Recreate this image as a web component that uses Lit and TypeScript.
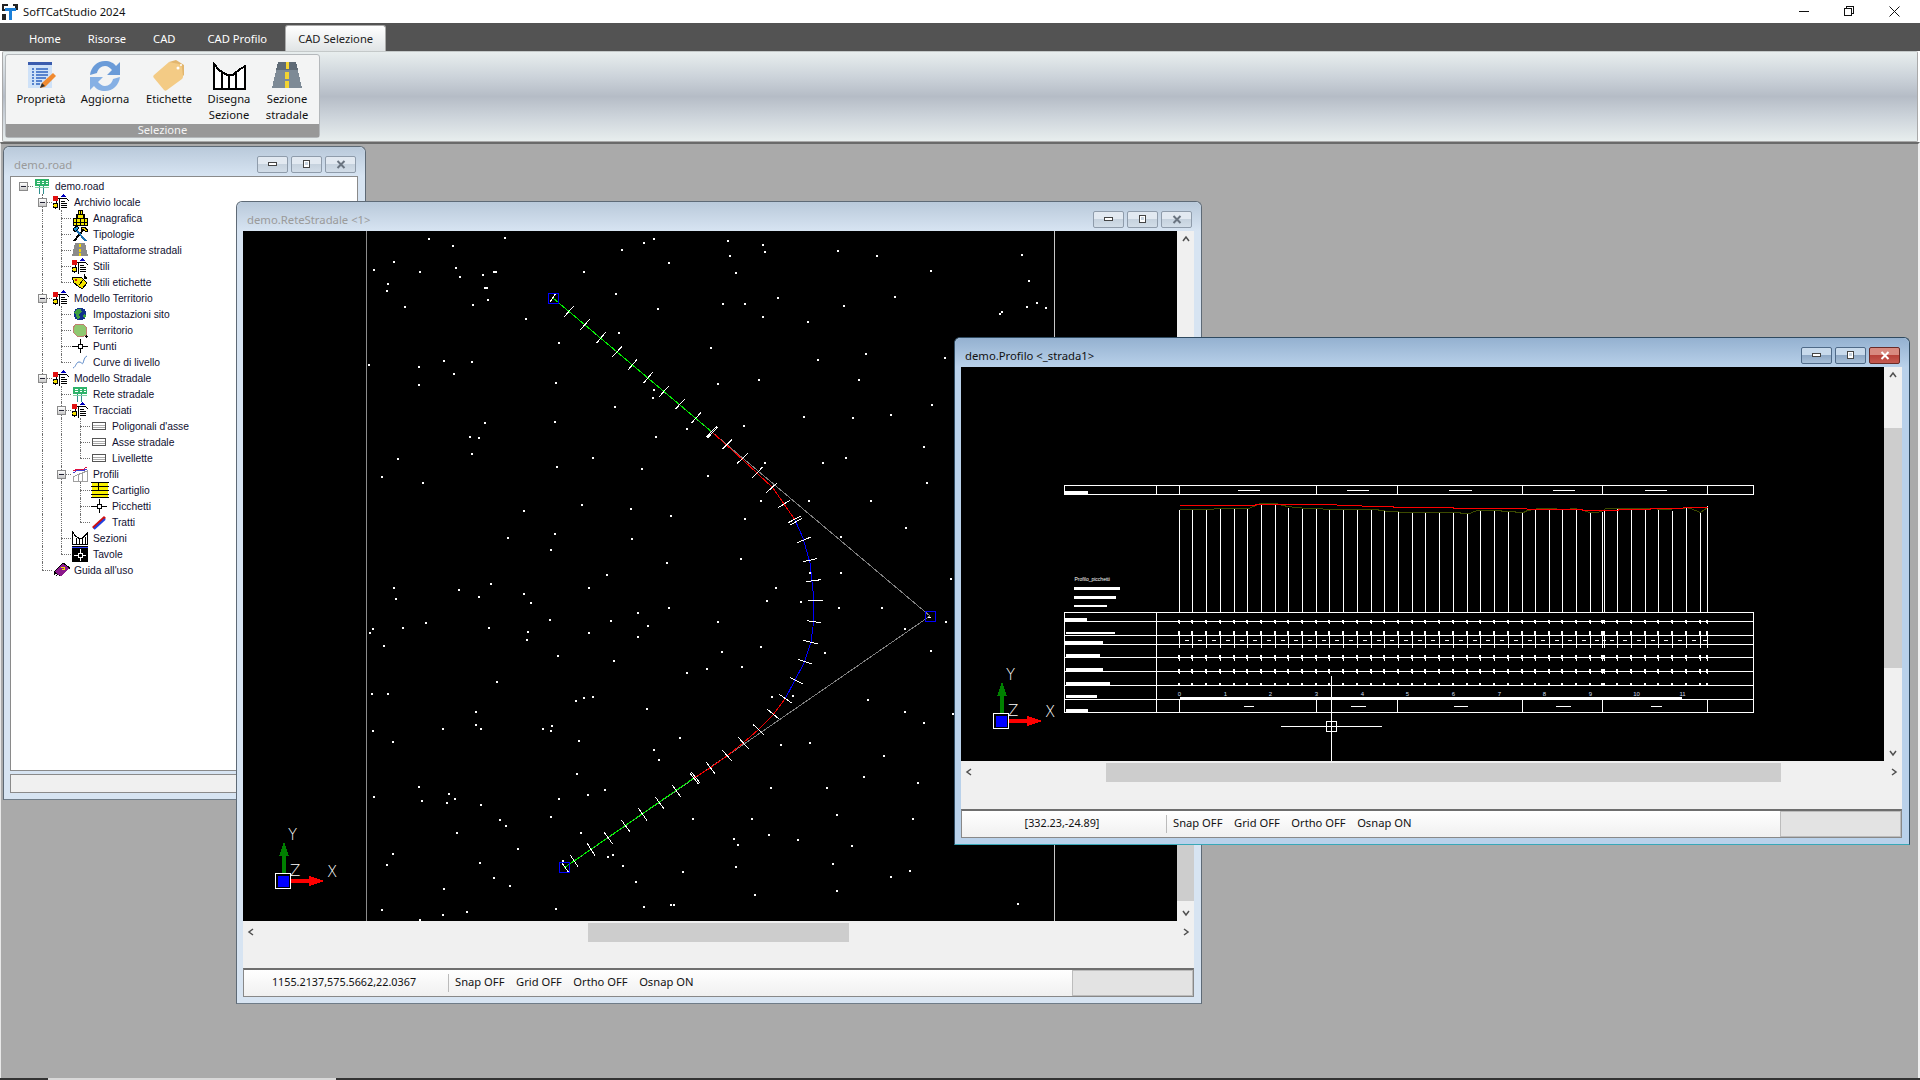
import { LitElement, css, html, svg } from "lit";
import { customElement, property } from "lit/decorators.js";

// helpers for the pixel-ish icons
const ic = (w: number, h: number, body: unknown, crisp = true) => html`<svg
  width=${w}
  height=${h}
  viewBox="0 0 ${w} ${h}"
  shape-rendering=${crisp ? "crispEdges" : "auto"}
>${body}</svg>`;

const structIcon = ic(16, 16, svg`
  <rect x="0" y="2" width="5" height="5" fill="#e01010"/>
  <circle cx="2.5" cy="11.5" r="2.5" fill="#f4e000" stroke="#000"/>
  <path d="M6 4h7l3 3v9H6z" fill="#fff" stroke="#000"/>
  <path d="M8 7h4M8 9h6M8 11h6M8 13h6" stroke="#000"/>
  <path d="M10 0l3 3H7z" fill="#0000c0"/>
  <path d="M5 4h1M3 7v2" stroke="#000"/>`);
const signIcon = ic(16, 16, svg`
  <rect x="1" y="1" width="14" height="7" fill="#2fb36a"/>
  <path d="M3 3h3M3 5h3M8 3h2M8 5h2M12 3h2M12 5h2" stroke="#fff"/>
  <path d="M5 8h1v8H5zM9 8h1v8H9z" fill="#2f8f8f"/>
  <path d="M1 9h14" stroke="#7fd0a0"/>`);
const pileIcon = ic(16, 16, svg`
  <path d="M6 0h4v4h2v4h3v7H1V8h3V4h2z" fill="#f4e800" stroke="#000"/>
  <path d="M6 4h4M4 8h8M8 0v4M5 4v4M11 4v4M8 8v7M4 8v7M12 8v7M1 12h14" stroke="#000"/>`);
const toolsIcon = ic(16, 16, svg`
  <path d="M2 15L12 3" stroke="#000" stroke-width="2"/>
  <path d="M14 15L4 4" stroke="#1a6fb0" stroke-width="2"/>
  <path d="M1 3l4-3 2 2-4 4z" fill="#1a8fd0" stroke="#000"/>
  <path d="M9 1h4l3 4-2 1-3-3H9z" fill="#f0d000" stroke="#000"/>`);
const roadSmall = ic(16, 14, svg`
  <path d="M3 0h10l3 13H0z" fill="#8b8b8b"/>
  <path d="M7 1h2v3H7zM7 6h2v3H7zM7 10h2v3H7z" fill="#f4d800"/>`);
const tagIcon = ic(16, 16, svg`
  <path d="M0 3h9l6 6-5 6-8-6z" fill="#f4e400" stroke="#000"/>
  <circle cx="4" cy="6" r="1.5" fill="#d01010"/>
  <path d="M12 0v4h3M7 11l4-5" stroke="#000"/>`);
const globeIcon = ic(16, 16, svg`
  <circle cx="8" cy="8" r="6.5" fill="#10308c"/>
  <path d="M5 3h4l1 3-3 2 1 4-3 1-1-5-2-1z" fill="#3fa03f"/>
  <path d="M11 9l2-1 1 2-2 3z" fill="#3fa03f"/>`);
const landIcon = ic(16, 16, svg`
  <path d="M1 6l3-4h7l3 3 1 8-3 1H5L1 10z" fill="#8fc870" stroke="#c08070"/>
  <path d="M13 14h3M14 13v3" stroke="#000"/>`);
const crossIcon = ic(16, 16, svg`
  <path d="M0 8h16M8 1v14" stroke="#000"/>
  <rect x="6" y="6" width="4" height="4" fill="#fff" stroke="#000"/>`);
const curveIcon = ic(16, 14, svg`
  <path d="M1 13c3-1 3-6 6-6s3 3 4 1 1-6 4-7" fill="none" stroke="#5a88c8"/>`, false);
const rowsIcon = ic(16, 10, svg`
  <rect x="1.5" y="1.5" width="13" height="7" fill="#fff" stroke="#555"/>
  <path d="M2 4h12M2 6h12" stroke="#aaa"/>`);
const profIcon = ic(16, 16, svg`
  <path d="M1 15V11l4-2 5-2 5-2v10z" fill="#fff" stroke="#a0a0a0"/>
  <path d="M6 9v6M10 7v8" stroke="#a0a0a0"/>
  <path d="M1 5l5-2 4 1 5-3" fill="none" stroke="#e01040"/>
  <path d="M1 7l5-3 4 1 5-2" fill="none" stroke="#4040d0"/>`);
const tableIcon = ic(18, 16, svg`
  <rect x="1" y="0" width="16" height="16" fill="#f8f000"/>
  <path d="M0 .5h18M0 4.5h18M0 8.5h18M0 12.5h18M0 15.5h18" stroke="#000" stroke-width="1.5"/>
  <path d="M7 0v8" stroke="#000"/>`);
const strokeIcon = ic(16, 16, svg`
  <path d="M2 14L14 3" stroke="#d01010" stroke-width="3"/>
  <path d="M3 15L14 5" stroke="#2040e0" stroke-width="2"/>`, false);
const sectIcon = ic(16, 14, svg`
  <path d="M.5 1l3 4 3 2h4l3-3 2-2v11H.5z" fill="#fff" stroke="#000"/>
  <path d="M4 7v6M7 8v5M10 8v5M13 6v7" stroke="#000"/>`);
const sheetIcon = ic(16, 16, svg`
  <rect width="16" height="16" fill="#000"/>
  <path d="M0 1h16" stroke="#3040ff"/>
  <path d="M2 9h12M8 3v12" stroke="#fff"/>
  <rect x="6" y="7" width="4" height="4" fill="#000" stroke="#fff"/>`);
const bookIcon = ic(18, 16, svg`
  <path d="M1 10L10 1l7 5-9 9z" fill="#8c1a8c" stroke="#000"/>
  <path d="M1 10v2l7 3M8 15l9-9" fill="none" stroke="#000"/>
  <path d="M2 12l6 3 8-8" fill="none" stroke="#fff"/>
  <path d="M8 5h3v2H9v1" fill="none" stroke="#f4e000"/>`);

interface TreeRow {
  t: string;
  l: number;
  i: unknown;
  exp?: boolean;
  last?: boolean;
  thru?: number[];
}

const treeRows: TreeRow[] = [
  { t: "demo.road", l: 0, i: signIcon, exp: true },
  { t: "Archivio locale", l: 1, i: structIcon, exp: true },
  { t: "Anagrafica", l: 2, i: pileIcon, thru: [1] },
  { t: "Tipologie", l: 2, i: toolsIcon, thru: [1] },
  { t: "Piattaforme stradali", l: 2, i: roadSmall, thru: [1] },
  { t: "Stili", l: 2, i: structIcon, thru: [1] },
  { t: "Stili etichette", l: 2, i: tagIcon, thru: [1], last: true },
  { t: "Modello Territorio", l: 1, i: structIcon, exp: true },
  { t: "Impostazioni sito", l: 2, i: globeIcon, thru: [1] },
  { t: "Territorio", l: 2, i: landIcon, thru: [1] },
  { t: "Punti", l: 2, i: crossIcon, thru: [1] },
  { t: "Curve di livello", l: 2, i: curveIcon, thru: [1], last: true },
  { t: "Modello Stradale", l: 1, i: structIcon, exp: true },
  { t: "Rete stradale", l: 2, i: signIcon, thru: [1] },
  { t: "Tracciati", l: 2, i: structIcon, thru: [1], exp: true },
  { t: "Poligonali d'asse", l: 3, i: rowsIcon, thru: [1, 2] },
  { t: "Asse stradale", l: 3, i: rowsIcon, thru: [1, 2] },
  { t: "Livellette", l: 3, i: rowsIcon, thru: [1, 2], last: true },
  { t: "Profili", l: 2, i: profIcon, thru: [1], exp: true },
  { t: "Cartiglio", l: 3, i: tableIcon, thru: [1, 2] },
  { t: "Picchetti", l: 3, i: crossIcon, thru: [1, 2] },
  { t: "Tratti", l: 3, i: strokeIcon, thru: [1, 2], last: true },
  { t: "Sezioni", l: 2, i: sectIcon, thru: [1] },
  { t: "Tavole", l: 2, i: sheetIcon, thru: [1], last: true },
  { t: "Guida all'uso", l: 1, i: bookIcon, last: true },
];

@customElement("road-tree")
class RoadTree extends LitElement {
  static styles = css`
    :host {
      display: block;
      font: 10.3px "Liberation Sans", sans-serif;
      color: #101030;
      padding: 1px 0 0 3px;
    }
    .row {
      display: flex;
      align-items: center;
      height: 16px;
    }
    .cell {
      flex: none;
      position: relative;
      width: 19px;
      height: 16px;
    }
    .thru::before,
    .link::before {
      content: "";
      position: absolute;
      left: 9px;
      top: 0;
      bottom: 0;
      border-left: 1px dotted #707070;
    }
    .link.last::before {
      bottom: 8px;
    }
    .link::after,
    .stub::after {
      content: "";
      position: absolute;
      left: 9px;
      top: 8px;
      width: 10px;
      border-top: 1px dotted #707070;
    }
    .exp {
      position: absolute;
      left: 5px;
      top: 4px;
      width: 7px;
      height: 7px;
      border: 1px solid #8a8a8a;
      background: linear-gradient(#fff, #c8c8c8);
      z-index: 1;
    }
    .exp::after {
      content: "";
      position: absolute;
      left: 1px;
      right: 1px;
      top: 3px;
      height: 1px;
      background: #223;
    }
    .icon {
      flex: none;
      width: 18px;
      height: 16px;
      margin-left: 1px;
      display: flex;
      align-items: center;
    }
    .label {
      margin-left: 3px;
      white-space: nowrap;
    }
  `;

  render() {
    return treeRows.map((r) => {
      const cells = [];
      for (let c = 0; c < r.l; c++) {
        cells.push(html`<div class="cell ${r.thru?.includes(c) ? "thru" : ""}"></div>`);
      }
      const kind = r.l === 0 ? "stub" : r.last ? "link last" : "link";
      return html`<div class="row">
        ${cells}
        <div class="cell ${kind}">${r.exp ? html`<div class="exp"></div>` : ""}</div>
        <div class="icon">${r.i}</div>
        <div class="label">${r.t}</div>
      </div>`;
    });
  }
}

const dot = (x: number, y: number) => `M${Math.round(x)} ${Math.round(y)}h2v2h-2z`;
// point lists read off the drawing, in crop pixels
const starsA = [255,38,380,84,575,68,641,68,741,50,1093,47,938,74,696,107,831,122,265,157,84,185,541,202,1004,218,860,238,1243,232,75,305,561,309,683,296,985,296,369,328,366,350,1204,371,252,377,819,407,966,410,1080,403,72,424,468,443,639,436,375,467,1180,497,186,531,945,531,78,558,333,563,703,546,875,546,531,584,1188,605,690,659,834,659,1020,659,152,671,300,683,420,706,642,713,1126,741,72,760,303,773,931,768,61,808,630,833,408,847,837,875,931,875,229,883,174,920,736,920,1261,893,708,959,810,962,414,982,924,982,1053,982];
const starsB = [57,57,240,60,320,35,352,76,414,22,561,62,924,22,1053,22,1245,62,175,97,321,109,1123,84,82,164,691,137,573,154,882,157,1200,149,249,180,528,205,633,198,468,217,723,288,787,285,1012,296,136,299,159,291,186,288,348,323,1123,332,1267,338,1180,365,64,374,36,383,60,391,144,420,447,411,750,432,837,426,369,447,385,477,1059,465,138,520,999,527,720,561,888,561,1160,546,222,567,171,582,84,594,60,647,487,653,663,654,918,642,1146,654,149,695,610,715,714,702,801,716,622,733,963,736,232,767,246,762,276,795,456,813,616,798,905,789,1137,810,1080,829,315,844,672,882,918,870,95,780];
const starsC = [372,0,422,5,490,12,527,57,540,75,441,96,314,158,563,144,302,192,488,186,515,231,547,255,416,264,291,328,368,357,413,343,462,334,640,324,816,318,870,312,876,312,1564,309];
const starsD = [567,228,675,215,789,228,762,275,1173,161,1059,228];
const ticksA = [103,110,131,78,151,149,180,117,199,190,227,157,248,230,276,199,295,269,321,238,340,310,368,277,388,350,416,318,436,388,464,357,484,430,513,397,529,472,560,438,533,474,562,442,577,508,606,478,622,550,653,520,667,593,698,561,709,638,741,609,745,683,781,660,775,728,812,708,780,735,815,716,802,788,843,771,820,845,861,836,829,905,873,899,834,961,879,961];
const ticksB = [831,62,873,68,820,121,864,132,805,178,846,192,781,233,819,252,748,283,785,309,712,328,747,357,670,374,702,404,625,412,655,446,577,451,606,483,529,487,555,521,479,518,505,552,484,516,509,548,427,556,452,590,376,591,402,627,325,624,351,662,274,660,300,696,222,696,248,732,171,729,195,767,121,766,144,800];

function netStars() {
  let d = "";
  for (let i = 0; i < starsA.length; i += 2) d += dot(530 + starsA[i] / 3, 280 + starsA[i + 1] / 3);
  for (let i = 0; i < starsB.length; i += 2) d += dot(530 + starsB[i] / 3, 600 + starsB[i + 1] / 3);
  for (let i = 0; i < starsC.length; i += 2) d += dot(235 + starsC[i] / 2, 800 + starsC[i + 1] / 3);
  for (let i = 0; i < starsD.length; i += 2) d += dot(230 + starsD[i] / 3, 195 + starsD[i + 1] / 3);
  // the parts of the scatter that were not read point by point
  let s = 77;
  const rnd = () => (s = (s * 16807) % 2147483647) / 2147483647;
  for (let i = 0; i < 46; i++) d += dot(368 + rnd() * 162, 300 + rnd() * 500);
  for (let i = 0; i < 12; i++) d += dot(368 + rnd() * 162, 236 + rnd() * 64);
  for (let i = 0; i < 12; i++) d += dot(640 + rnd() * 410, 236 + rnd() * 40);
  for (let i = 0; i < 6; i++) d += dot(962 + rnd() * 90, 280 + rnd() * 54);
  return d;
}

function segs(list: number[], ox: number, oy: number) {
  let d = "";
  for (let i = 0; i < list.length; i += 4) {
    d += `M${ox + list[i] / 3} ${oy + list[i + 1] / 3}L${ox + list[i + 2] / 3} ${oy + list[i + 3] / 3}`;
  }
  return d;
}

const axes = (dx: number, dy: number) => svg`
  <g transform="translate(${dx} ${dy})">
    <rect x="282" y="850" width="4" height="26" fill="#008000"/>
    <path d="M284 842l5 14h-10z" fill="#008000"/>
    <rect x="275.5" y="873.5" width="15" height="15" fill="#000" stroke="#fff"/>
    <rect x="278" y="876" width="11" height="11" fill="#0000ff"/>
    <rect x="291" y="879" width="20" height="4" fill="#ff0000"/>
    <path d="M324 881l-15 5v-10z" fill="#ff0000"/>
    <text x="288" y="840" class="ax">Y</text>
    <text x="290" y="876" class="ax">Z</text>
    <text x="327" y="877" class="ax">X</text>
  </g>`;

const netDrawing = html`<svg class="cad" viewBox="243 231 934 690" width="934" height="690" shape-rendering="crispEdges">
  <path d="M366.5 231V921" stroke="#8c8c8c"/>
  <path d="M1054.5 231V921" stroke="#c8c8c8"/>
  <path d=${netStars()} fill="#fff"/>
  <path d="M553 298L930 616L564 868" fill="none" stroke="#808080"/>
  <path d="M553 298L712 432" fill="none" stroke="#00f000"/>
  <path d="M712 432L743 460L773 488L795 520" fill="none" stroke="#f00000"/>
  <path d="M795 520L803 538L810 563L814 600L813 627L811 642L804 663L785 699" fill="none" stroke="#0000ff"/>
  <path d="M785 699L773 715L758 730L743 743L727 756L710 768L694 778" fill="none" stroke="#f00000"/>
  <path d="M694 778L564 868" fill="none" stroke="#00f000"/>
  <path d=${segs(ticksA, 530, 280) + segs(ticksB, 530, 600)} fill="none" stroke="#fff"/>
  <path d="M550 302L556 293M562 863L569 873M928 617h3" fill="none" stroke="#fff"/>
  <path d="M548.5 293.5h10v10h-10zM559.5 862.5h10v10h-10zM925.5 611.5h10v10h-10z" fill="none" stroke="#0000ff"/>
  ${axes(0, 0)}
</svg>`;

// profile sheet: crop pixels 3x from (1040,470)
const px = (v: number) => Math.round(1040 + v / 3) + 0.5;
const py = (v: number) => Math.round(470 + v / 3) + 0.5;
const bars = [418,457,499,541,583,622,664,706,745,787,829,868,910,952,994,1033,1073,1117,1156,1198,1240,1282,1321,1363,1405,1446,1486,1528,1567,1609,1651,1687,1693,1732,1774,1816,1855,1897,1939,1981,2002];
const tops = [117,117,117,115,115,113,100,100,110,112,113,115,118,118,118,120,123,125,127,127,127,130,120,120,123,127,115,115,115,115,125,122,115,115,115,115,115,120,110,125,105];
const hRows = [454, 496, 523, 562, 604, 646, 688];
const tickRows = [[448,460],[480,496],[552,570],[595,610],[637,646]];
const blocks = [[75,445,141,454],[78,487,225,492],[75,514,189,523],[78,553,180,562],[78,595,189,604],[78,637,210,646],[78,676,171,684],[78,718,144,727],[75,63,144,73],[102,351,240,359],[102,378,228,387],[102,405,201,411]];
const redLine = [418,106,640,106,650,103,888,103,890,106,963,106,965,109,1058,109,1060,112,1240,112,1240,115,1458,115,1460,118,1626,118,1626,121,1735,121,1735,118,1830,118,1830,115,1925,115,1930,112,2002,112];
const oliveLine = [418,118,520,118,522,115,625,115,640,108,660,100,705,100,740,108,765,112,805,115,888,118,1013,118,1015,121,1053,124,1095,127,1260,127,1260,130,1290,130,1300,124,1315,121,1383,121,1383,124,1425,124,1425,127,1450,127,1460,121,1485,118,1488,115,1548,115,1548,118,1590,118,1590,115,1626,118,1635,124,1650,127,1670,127,1690,121,1695,115,1830,115,1865,118,1925,115,1938,110,1950,115,1980,127,2002,112];
const poly = (l: number[]) => {
  const o: string[] = [];
  for (let i = 0; i < l.length; i += 2) o.push(`${px(l[i])},${py(l[i + 1])}`);
  return o.join(" ");
};

function sheetLines() {
  let d = `M${px(72)} ${py(45)}H${px(2140)}V${py(73)}H${px(72)}Z`;
  d += `M${px(72)} ${py(427)}H${px(2140)}V${py(727)}H${px(72)}Z`;
  for (const v of [349, 418, 829, 1072, 1447, 1687, 2002]) d += `M${px(v)} ${py(45)}V${py(73)}`;
  for (const v of [349, 418, 829, 1072, 1447, 1687, 2002]) d += `M${px(v)} ${py(688)}V${py(727)}`;
  d += `M${px(349)} ${py(427)}V${py(727)}`;
  for (const y of hRows) d += `M${px(72)} ${py(y)}H${px(2140)}`;
  bars.forEach((b, i) => {
    d += `M${px(b)} ${py(tops[i])}V${py(425)}`;
    for (const [a, z] of tickRows) d += `M${px(b)} ${py(a)}V${py(z)}M${px(b) - 1} ${py(a)}V${py(z - 5)}`;
    d += `M${px(b)} ${py(489)}V${py(530)}`;
  });
  for (let i = 0; i < bars.length - 1; i++) {
    const m = (bars[i] + bars[i + 1]) / 2;
    d += `M${px(m - 6)} ${py(511)}h4`;
  }
  for (const [a, z] of [[591,657],[918,984],[1224,1293],[1536,1602],[1812,1878]]) d += `M${px(a)} ${py(61)}H${px(z)}`;
  for (const [a, z] of [[609,639],[930,975],[1239,1281],[1545,1590],[1830,1863]]) d += `M${px(a)} ${py(709)}H${px(z)}`;
  return d;
}

const stations = [[418,"0"],[556,"1"],[691,"2"],[829,"3"],[967,"4"],[1102,"5"],[1240,"6"],[1378,"7"],[1513,"8"],[1651,"9"],[1788,"10"],[1926,"11"]] as const;

const profileDrawing = html`<svg class="cad" viewBox="961 367 923 394" width="923" height="394" shape-rendering="crispEdges">
  <path d=${sheetLines()} fill="none" stroke="#fff"/>
  ${blocks.map(([a, b, c, e]) => svg`<rect x=${px(a) - 0.5} y=${py(b) - 0.5} width=${Math.round((c - a) / 3)} height=${Math.max(2, Math.round((e - b) / 3))} fill="#fff"/>`)}
  <rect x=${px(418)} y=${py(678)} width="502" height="2" fill="#fff"/>
  <polyline points=${poly(oliveLine)} fill="none" stroke="#3c4a00"/>
  <polyline points=${poly(redLine)} fill="none" stroke="#ff0000"/>
  <text x=${px(102)} y=${py(330)} class="tiny">Profilo_picchetti</text>
  ${stations.map(([x, t]) => svg`<text x=${px(x)} y=${py(675)} class="sta">${t}</text>`)}
  <path d="M1331.5 676V761M1281 726.5H1382" fill="none" stroke="#fff"/>
  <rect x="1326.5" y="721.5" width="10" height="10" fill="none" stroke="#fff"/>
  ${axes(718, -160)}
</svg>`;

const chevron = (d: string) => html`<svg width="8" height="8" viewBox="0 0 8 8"><path d=${d} fill="none" stroke="#505050" stroke-width="1.5"/></svg>`;
const chevUp = chevron("M1 6l3-4 3 4");
const chevDown = chevron("M1 2l3 4 3-4");
const chevLeft = chevron("M6 1L2 4l4 3");
const chevRight = chevron("M2 1l4 3-4 3");

@customElement("mdi-window")
class MdiWindow extends LitElement {
  @property() heading = "";
  @property({ type: Boolean, reflect: true }) active = false;

  static styles = css`
    :host {
      display: flex;
      flex-direction: column;
      position: absolute;
      box-sizing: border-box;
      padding: 0 7px 6px 6px;
      border: 1px solid #5e6a76;
      border-bottom-color: #6f7c88;
      border-radius: 6px 6px 0 0;
      background: #d7e4f2;
      font: 11.3px "Noto Sans", sans-serif;
    }
    :host([active]) {
      background: #b9d1ea;
      border-color: #2f4a60;
      border-bottom-color: #38a8b8;
    }
    .head {
      flex: none;
      height: 29px;
      margin: 0 -7px 0 -6px;
      padding: 0 9px 0 10px;
      display: flex;
      align-items: center;
      border-radius: 6px 6px 0 0;
      background: linear-gradient(#b9c9da, #d7e4f2);
      color: #9a9a9a;
    }
    :host([active]) .head {
      background: linear-gradient(#94b1d0, #b9d1ea);
      color: #111;
    }
    .head span {
      flex: 1;
      padding-top: 6px;
    }
    .btns {
      display: flex;
      gap: 3px;
      margin: 5px 0 0 0;
      color: #6a7480;
    }
    .btn {
      width: 31px;
      height: 17px;
      box-sizing: border-box;
      border: 1px solid #8f9cab;
      border-radius: 2px;
      display: flex;
      align-items: center;
      justify-content: center;
      background: linear-gradient(#e2e9f1 45%, #c6d2de 50%, #d2dde8);
    }
    :host([active]) .btn {
      border-color: #4f6a88;
      background: linear-gradient(#c8daec 45%, #8fa9c6 50%, #a8c0d8);
    }
    :host([active]) .btn.x {
      border-color: #6a2a26;
      color: #fff;
      background: linear-gradient(#d88a80 45%, #b8423a 50%, #c45a50);
    }
    .body {
      flex: 1;
      min-height: 0;
      display: flex;
      flex-direction: column;
    }
  `;

  render() {
    return html`<div class="head">
        <span>${this.heading}</span>
        <div class="btns">
          <div class="btn">
            <svg width="9" height="5" shape-rendering="crispEdges"><rect x=".5" y=".5" width="8" height="3" fill="#fff" stroke="#444"/></svg>
          </div>
          <div class="btn">
            <svg width="9" height="9" shape-rendering="crispEdges"><rect x="1.5" y=".5" width="6" height="7" fill="#fff" stroke="#444"/><rect x="3" y="2" width="3" height="3" fill="#c8d4e0"/></svg>
          </div>
          <div class="btn x">
            <svg width="10" height="9"><path d="M1.5 1l7 7M8.5 1l-7 7" stroke="currentColor" stroke-width="2"/></svg>
          </div>
        </div>
      </div>
      <div class="body"><slot></slot></div>`;
  }
}

@customElement("cad-view")
class CadView extends LitElement {
  @property({ attribute: false }) drawing: unknown;
  @property() coords = "";
  @property({ type: Number }) cw = 0;
  @property({ type: Number }) ch = 0;
  @property({ attribute: false }) vThumb: number[] = [0, 0];
  @property({ attribute: false }) hThumb: number[] = [0, 0];

  static styles = css`
    :host {
      display: grid;
      height: 100%;
      grid-template-rows: auto 1fr;
      background: #f0f0f0;
    }
    .top {
      display: flex;
    }
    .canvas {
      background: #000;
      flex: none;
      line-height: 0;
    }
    .cad {
      display: block;
    }
    .cad .ax {
      font: 200 15px "DejaVu Sans", sans-serif;
      fill: #fff;
    }
    .cad .tiny {
      font: 5px "Liberation Sans", sans-serif;
      fill: #fff;
    }
    .cad .sta {
      font: 6px "Liberation Sans", sans-serif;
      fill: #cde;
      text-anchor: middle;
    }
    .vbar {
      flex: 1;
      position: relative;
      display: flex;
      flex-direction: column;
      justify-content: space-between;
      align-items: center;
      padding: 4px 0;
      box-sizing: border-box;
    }
    .vthumb,
    .hthumb {
      position: absolute;
      background: #cdcdcd;
    }
    .vthumb {
      left: 0;
      right: 0;
    }
    .hthumb {
      top: 1px;
      height: 19px;
    }
    .hbar {
      position: relative;
      height: 20px;
      margin-top: 1px;
      display: flex;
      justify-content: space-between;
      align-items: center;
      padding: 0 4px;
    }
    .bottom {
      display: flex;
      flex-direction: column;
      justify-content: flex-end;
    }
    .status {
      height: 29px;
      box-sizing: border-box;
      display: flex;
      align-items: center;
      border: 1px solid #888;
      border-top: 2px solid #6e6e6e;
      background: linear-gradient(#fff, #f0f0f0);
      color: #111;
      font: 11.2px "Noto Sans", sans-serif;
    }
    .coords {
      width: 200px;
      padding-right: 4px;
      text-align: center;
      border-right: 1px solid #bbb;
      height: 18px;
      line-height: 16px;
      margin-right: 6px;
      flex: none;
      font-size: 10.8px;
    }
    .item {
      margin-right: 11.5px;
      white-space: nowrap;
      line-height: 16px;
      height: 18px;
    }
    .rest {
      margin-left: auto;
      width: 121px;
      height: 100%;
      box-sizing: border-box;
      background: #e3e3e3;
      border: 1px solid #bcbcbc;
      flex: none;
    }
  `;

  render() {
    return html`<div class="top">
        <div class="canvas" style="width:${this.cw}px;height:${this.ch}px">${this.drawing}</div>
        <div class="vbar">
          <div class="vthumb" style="top:${this.vThumb[0]}px;height:${this.vThumb[1]}px"></div>
          ${chevUp}${chevDown}
        </div>
      </div>
      <div class="bottom">
        <div class="hbar">
          <div class="hthumb" style="left:${this.hThumb[0]}px;width:${this.hThumb[1]}px"></div>
          ${chevLeft}${chevRight}
        </div>
        <div style="flex:1"></div>
        <div class="status">
          <div class="coords">${this.coords}</div>
          <div class="item">Snap OFF</div>
          <div class="item">Grid OFF</div>
          <div class="item">Ortho OFF</div>
          <div class="item">Osnap ON</div>
          <div class="rest"></div>
        </div>
      </div>`;
  }
}

const ribbonButtons = [
  {
    w: 64,
    label: ["Proprietà"],
    icon: ic(32, 32, svg`
      <rect x="3" y="2" width="24" height="26" fill="#cfe2f8"/>
      <rect x="3" y="2" width="24" height="3" fill="#3a5cae"/>
      <path d="M7 9h2M11 9h12M7 12h2M11 12h12M7 15h2M11 15h12M7 18h2M11 18h10M7 21h2M11 21h6M7 24h2M11 24h4" stroke="#2f64c0" stroke-width="1.5"/>
      <path d="M15 28l2-5 11-10 3 3-11 11z" fill="#f08a30"/>
      <path d="M15 28l2-5 3 3z" fill="#333"/>`, false),
  },
  {
    w: 64,
    label: ["Aggiorna"],
    icon: ic(32, 32, svg`
      <path d="M1 15C2 7 8 1 16 1c5 0 9 2 11 5l4-4v13H18l5-5c-2-2-4-4-7-4-4 0-7 3-8 7z" fill="#6a9bd8"/>
      <path d="M1 15C2 7 8 1 16 1c5 0 9 2 11 5l4-4v13H18l5-5c-2-2-4-4-7-4-4 0-7 3-8 7z" transform="rotate(180 16 16)" fill="#86b0e4"/>`, false),
  },
  {
    w: 64,
    label: ["Etichette"],
    icon: ic(32, 32, svg`
      <path d="M16 2l7-2 8 5v10l-2 2-6-8z" fill="#e2b66e"/>
      <path d="M1 15L16 2l10 2c2 1 3 2 3 4l1 8c0 1 0 2-1 3L14 30c-1 1-2 1-3 0L1 18c-1-1-1-2 0-3z" fill="#f3cb85"/>
      <circle cx="25" cy="8" r="1.5" fill="#fff"/>
      <circle cx="28" cy="5" r="1" fill="#fff"/>`, false),
  },
  {
    w: 56,
    label: ["Disegna", "Sezione"],
    icon: ic(34, 28, svg`
      <path d="M1.5 1.5l6 7 7 4h7l6-5 5-3v22h-31z" fill="#fff" stroke="#000" stroke-width="2"/>
      <path d="M10 11v15M17 13v13M24 9v17" stroke="#000" stroke-width="2"/>`),
  },
  {
    w: 60,
    label: ["Sezione", "stradale"],
    icon: ic(32, 28, svg`
      <path d="M7 0h18l6 26H1z" fill="#7d8a96"/>
      <path d="M7 0h18l2 8H5z" fill="#5f6b76"/>
      <path d="M14.5 0h3v7h-3zM14 10h4v7h-4zM14 19h4v7h-4z" fill="#f4d430"/>`),
  },
];

const tabs = ["Home", "Risorse", "CAD", "CAD Profilo"];

@customElement("app-root")
class AppRoot extends LitElement {
  static styles = css`
    :host {
      display: flex;
      flex-direction: column;
      width: 1920px;
      height: 1080px;
      overflow: hidden;
      background: #fff;
      font: 11.2px "Noto Sans", sans-serif;
      color: #111;
    }
    .titlebar {
      flex: none;
      height: 23px;
      display: flex;
      align-items: center;
      padding-left: 2px;
    }
    .titlebar .name {
      margin-left: 5px;
      flex: 1;
    }
    .ctl {
      display: flex;
      margin-right: 20px;
      gap: 34px;
    }
    .tabs {
      flex: none;
      height: 28px;
      display: flex;
      background: #535353;
      color: #fff;
      padding-left: 29px;
      align-items: flex-end;
    }
    .tab {
      height: 26px;
      line-height: 28px;
    }
    .tab:nth-child(2) { margin-left: 27px; }
    .tab:nth-child(3) { margin-left: 27px; }
    .tab:nth-child(4) { margin-left: 32px; }
    .tab.on {
      margin-left: 18px;
      width: 101px;
      box-sizing: border-box;
      line-height: 26px;
      text-align: center;
      color: #222;
      background: linear-gradient(#fff, #e0e4e5);
      border-radius: 3px 3px 0 0;
      border: 1px solid #aaa;
      border-bottom: 0;
    }
    .ribbon {
      flex: none;
      height: 91px;
      margin: 0 2px;
      box-sizing: border-box;
      padding: 2px;
      border: 1px solid #a9a9a9;
      border-top-color: #c4c9c9;
      border-radius: 2px;
      background: linear-gradient(#e8eeee 0%, #ccd3da 28%, #b5bcc6 50%, #ccd3da 72%, #e8eeee 100%);
    }
    .group {
      width: 315px;
      height: 84px;
      box-sizing: border-box;
      display: flex;
      flex-direction: column;
      background: #f3f4f4;
      border: 1px solid #b4b8bb;
      border-radius: 3px;
    }
    .buttons {
      flex: 1;
      display: flex;
      padding-left: 3px;
    }
    .rb {
      display: flex;
      flex-direction: column;
      align-items: center;
      line-height: 16px;
      padding-top: 4px;
      text-align: center;
    }
    .rb .pic {
      height: 33px;
      display: flex;
      align-items: center;
      margin-bottom: -1px;
    }
    .glabel {
      height: 13px;
      line-height: 11px;
      text-align: center;
      color: #f4f4f4;
      background: #989898;
    }
    .desk {
      flex: 1;
      position: relative;
      background: #aaaaaa;
      border-top: 2px solid #6a6a6a;
      border-right: 2px solid #f0f0f0;
      border-left: 1px solid #e8e8e8;
    }
    .treewin {
      display: flex;
      flex-direction: column;
      height: 100%;
      gap: 3px;
    }
    .treebox {
      height: 595px;
      background: #fff;
      border: 1px solid #8a8a8a;
      box-sizing: border-box;
    }
    .treefoot {
      flex: 1;
      background: #f0f0f0;
      border: 1px solid #8a8a8a;
    }
    .strip {
      flex: none;
      height: 2px;
      display: flex;
      background: #333;
    }
    .strip div {
      width: 288px;
      margin-left: 48px;
      background: #d8d8d8;
    }
  `;

  render() {
    return html`
      <div class="titlebar">
        <svg width="16" height="16" viewBox="0 0 16 16" shape-rendering="crispEdges">
          <rect width="16" height="16" fill="#fff"/>
          <path d="M0 0h6v2H2v3h3v2H0zM0 10h4v6H0zM11 0h5v6h-3V2h-2z" fill="#222"/>
          <path d="M3 4h11v3H10v9H7V7H3z" fill="#1b7fd8"/>
        </svg>
        <div class="name">SofTCatStudio 2024</div>
        <div class="ctl">
          <svg width="11" height="11" shape-rendering="crispEdges"><path d="M0 5.5h10" stroke="#111"/></svg>
          <svg width="11" height="11" shape-rendering="crispEdges"><rect x=".5" y="2.5" width="7" height="7" fill="#fff" stroke="#111"/><path d="M2.5 2.5v-2h7v7h-2" fill="none" stroke="#111"/></svg>
          <svg width="11" height="11"><path d="M.5.5l10 10M10.5.5l-10 10" stroke="#111"/></svg>
        </div>
      </div>
      <div class="tabs">
        ${tabs.map((t) => html`<div class="tab">${t}</div>`)}
        <div class="tab on">CAD Selezione</div>
      </div>
      <div class="ribbon">
        <div class="group">
          <div class="buttons">
            ${ribbonButtons.map(
              (b) => html`<div class="rb" style="width:${b.w}px">
                <div class="pic">${b.icon}</div>
                ${b.label.map((l) => html`<div>${l}</div>`)}
              </div>`
            )}
          </div>
          <div class="glabel">Selezione</div>
        </div>
      </div>
      <div class="desk">
        <mdi-window heading="demo.road" style="left:2px;top:2px;width:363px;height:654px">
          <div class="treewin">
            <div class="treebox"><road-tree></road-tree></div>
            <div class="treefoot"></div>
          </div>
        </mdi-window>
        <mdi-window heading="demo.ReteStradale <1>" style="left:235px;top:57px;width:966px;height:803px">
          <cad-view
            .drawing=${netDrawing}
            coords="1155.2137,575.5662,22.0367"
            cw="934"
            ch="690"
            .vThumb=${[110, 560]}
            .hThumb=${[345, 261]}
          ></cad-view>
        </mdi-window>
        <mdi-window active heading="demo.Profilo <_strada1>" style="left:953px;top:193px;width:956px;height:508px">
          <cad-view
            .drawing=${profileDrawing}
            coords="[332.23,-24.89]"
            cw="923"
            ch="394"
            .vThumb=${[61, 240]}
            .hThumb=${[145, 675]}
          ></cad-view>
        </mdi-window>
      </div>
      <div class="strip"><div></div></div>
    `;
  }
}
